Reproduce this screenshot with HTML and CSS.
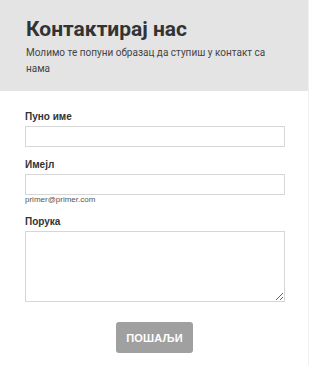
FILE: index.html
```html
<!DOCTYPE html>
<html lang="sr">
<head>
  <meta charset="UTF-8" />
  <meta name="viewport" content="width=device-width, initial-scale=1.0"/>
  <title>Контактирај нас</title>
  <link rel="stylesheet" href="styles.css">
</head>
<body>
  <div class="page">
    <!-- Заглавље -->
    <div class="header">
      <h1>Контактирај нас</h1>
      <p>Молимо те попуни образац да ступиш у контакт са нама</p>
    </div>

    <!-- Образац -->
    <form class="form" onsubmit="return false;">
      <label class="label" for="name">Пуно име</label>
      <input type="text" id="name" class="input" />

      <label class="label" for="email">Имејл</label>
      <input type="text" id="email" class="input" />
      <div class="hint">primer@primer.com</div>

      <label class="label" for="message">Порука</label>
      <textarea id="message" class="input area"></textarea>

      <div class="actions">
        <button type="submit" class="send">ПОШАЉИ</button>
      </div>
    </form>
  </div>
</body>
</html>
```

FILE: styles.css
```css
body {
  margin: 0;
  background: #fff;
}
.page {
  width: 308px;
  min-height: 365px;
  border-right: 1px solid #f0f0f0;
}
.header {
  background-color: #e4e4e4;
  padding: 15px 20px 14px 26px;
}
.header h1 {
  margin: 0;
  font-family: Roboto, sans-serif;
  font-weight: 700;
  font-size: 21px;
  line-height: 28px;
  color: #333;
}
.header p {
  margin: 2px 0 0;
  font-family: Roboto, sans-serif;
  font-size: 10px;
  line-height: 16px;
  color: #444;
}
.form {
  padding: 20px 24px 0 25px;
  font-family: "Liberation Sans", Arial, sans-serif;
}
.label {
  display: block;
  font-size: 10px;
  font-weight: 700;
  color: #333;
  line-height: 12px;
  margin-bottom: 3px;
}
.input {
  display: block;
  box-sizing: border-box;
  width: 260px;
  height: 21px;
  margin: 0 0 12px;
  border: 1px solid #d6d6d6;
  border-radius: 0;
  padding: 3px 5px;
  font-family: inherit;
}
.hint {
  font-size: 8px;
  line-height: 9px;
  color: #555;
  margin: -12px 0 12px;
}
.area {
  height: 71px;
  margin-bottom: 0;
  resize: vertical;
}
.actions {
  text-align: center;
  padding-top: 20px;
}
.send {
  width: 77px;
  height: 31px;
  border: none;
  border-radius: 3px;
  background-color: #a0a0a0;
  color: #fff;
  font-family: "Liberation Sans", Arial, sans-serif;
  font-weight: 700;
  font-size: 11px;
  letter-spacing: 0.2px;
}
```
